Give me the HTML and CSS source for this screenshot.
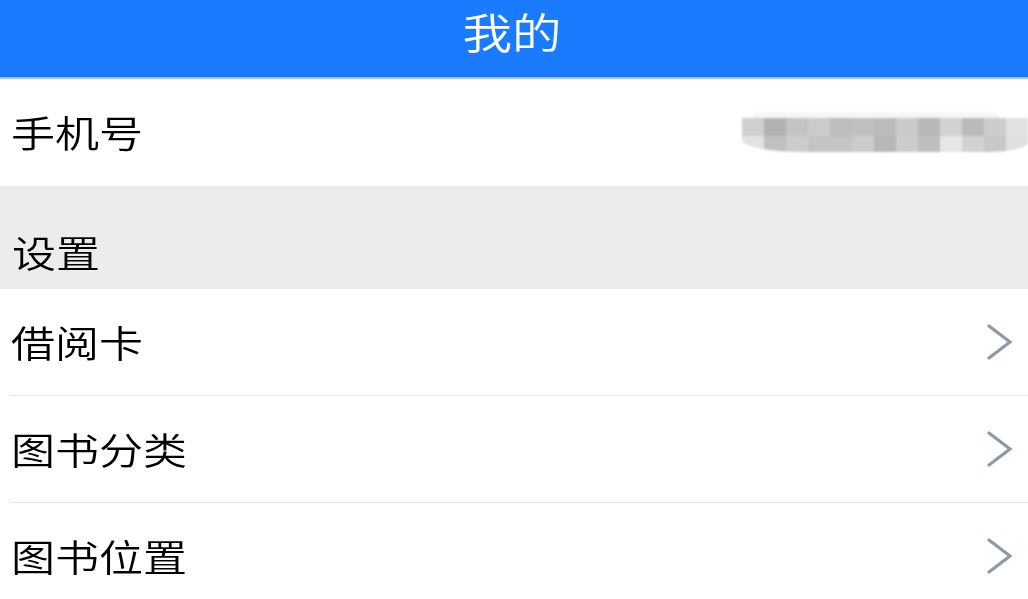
FILE: index.html
```html
<!DOCTYPE html>
<html lang="zh">
<head>
<meta charset="utf-8">
<title>我的</title>
<link rel="stylesheet" href="styles.css">
</head>
<body>
<header class="topbar">
  <span class="title">我的</span>
</header>
<div class="row phone-row">
  <span class="label">手机号</span>
  <div class="masked" aria-label="已隐藏">
    <div class="mask-top"></div>
    <div class="mask-row1"></div>
    <div class="mask-row2"></div>
  </div>
</div>
<div class="section-head">
  <span class="label">设置</span>
</div>
<div class="row link-row">
  <span class="label">借阅卡</span>
  <svg class="chev" width="26" height="36" viewBox="0 0 26 36"><polyline points="2,2 23,18 2,34" fill="none" stroke="#8d9aa6" stroke-width="3.2" stroke-linecap="round" stroke-linejoin="miter"/></svg>
</div>
<div class="row link-row">
  <span class="label">图书分类</span>
  <svg class="chev" width="26" height="36" viewBox="0 0 26 36"><polyline points="2,2 23,18 2,34" fill="none" stroke="#8d9aa6" stroke-width="3.2" stroke-linecap="round" stroke-linejoin="miter"/></svg>
</div>
<div class="row link-row">
  <span class="label">图书位置</span>
  <svg class="chev" width="26" height="36" viewBox="0 0 26 36"><polyline points="2,2 23,18 2,34" fill="none" stroke="#8d9aa6" stroke-width="3.2" stroke-linecap="round" stroke-linejoin="miter"/></svg>
</div>
</body>
</html>
```
FILE: styles.css
```css
html, body {
  margin: 0;
  padding: 0;
  background: #ffffff;
  font-family: "Noto Sans CJK SC", "Noto Sans", sans-serif;
  overflow: hidden;
}

.topbar {
  height: 76px;
  background: #1a7bff;
  border-bottom: 1px solid #1a6edf;
  box-shadow: 0 2px 0 #9ccbff;
  display: flex;
  justify-content: center;
  align-items: center;
  position: relative;
  z-index: 1;
}

.title {
  display: inline-block;
  color: #ffffff;
  font-size: 42px;
  font-weight: 350;
  line-height: 1;
  transform: scaleX(1.18);
  margin-top: -14px;
  margin-left: -4px;
}

.label {
  display: inline-block;
  font-size: 37px;
  font-weight: 350;
  line-height: 1;
  color: #000000;
  transform: scaleX(1.19);
  transform-origin: left center;
}

.row {
  display: flex;
  align-items: center;
  justify-content: space-between;
  padding-left: 11px;
}

.phone-row {
  height: 107px;
  margin-top: 2px;
}

.masked {
  width: 286px;
  height: 40px;
  display: flex;
  flex-direction: column;
  filter: blur(0.8px);
  margin-top: -2px;
}

.mask-top {
  height: 6px;
  margin: 0 30px 0 10px;
  background: #f6f6f6;
  border-radius: 6px 6px 0 0;
}

.mask-row1 {
  height: 18px;
  background: linear-gradient(to right,
    #cfcfcf 0 22px, #b2b2b2 22px 44px, #c3c3c3 44px 66px, #cbcbcb 66px 88px,
    #bdbdbd 88px 110px, #c0c0c0 110px 132px, #bcbcbc 132px 154px, #cacaca 154px 176px,
    #b8b8b8 176px 198px, #d2d2d2 198px 220px, #bababa 220px 242px, #cccccc 242px 264px,
    #e2e2e2 264px 286px);
}

.mask-row2 {
  height: 16px;
  border-radius: 0 0 40px 60px / 0 0 10px 12px;
  background: linear-gradient(to right,
    #e2e2e2 0 22px, #c0c0c0 22px 44px, #cccccc 44px 66px, #c4c4c4 66px 88px,
    #c4c4c4 88px 110px, #cccccc 110px 132px, #b8b8b8 132px 154px, #cccccc 154px 176px,
    #bebebe 176px 198px, #e6e6e6 198px 220px, #d2d2d2 220px 242px, #c8c8c8 242px 264px,
    #e0e0e0 264px 286px);
}

.section-head {
  height: 73px;
  padding-top: 30px;
  padding-left: 12px;
  background: #ececec;
  display: flex;
  align-items: center;
}

.link-row {
  height: 106px;
  margin-left: 10px;
  padding-left: 1px;
  border-bottom: 1px solid #e6e6e6;
}

.link-row .chev {
  margin-right: 15px;
}
```
